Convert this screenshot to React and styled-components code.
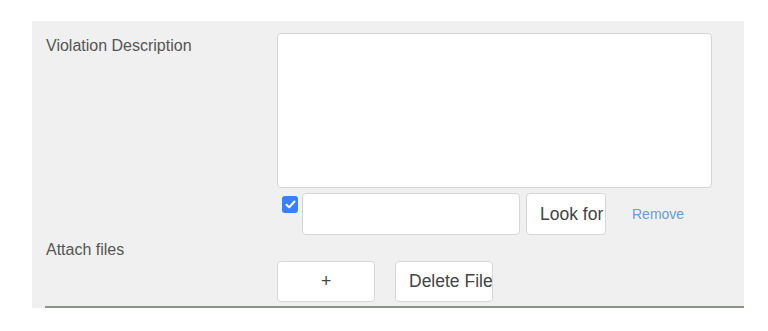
import React from "react";
import styled, { createGlobalStyle } from "styled-components";

const GlobalStyle = createGlobalStyle`
  body {
    margin: 0;
    background: #fff;
    font-family: "Liberation Sans", Arial, sans-serif;
  }
`;

const Page = styled.div`
  padding: 21px 0 0 32px;
`;

const Panel = styled.div`
  width: 712px;
  height: 287px;
  box-sizing: border-box;
  background: #f0f0f0;
  padding-top: 12px;
  display: flex;
  flex-direction: column;
`;

const Row = styled.div`
  display: flex;
  align-items: flex-start;
  margin-top: ${(p) => p.$top || 0}px;
`;

const Label = styled.div`
  width: 231px;
  padding-left: 14px;
  padding-top: ${(p) => p.$pad || 0}px;
  font-size: 16px;
  line-height: 20px;
  color: #555;
`;

const Spacer = styled.div`
  width: 245px;
  flex: none;
`;

const TextArea = styled.textarea`
  width: 435px;
  height: 155px;
  box-sizing: border-box;
  border: 1px solid #d4d4d4;
  border-radius: 4px;
  background: #fff;
  resize: none;
  outline: none;
  margin: 0;
`;

const Check = styled.span`
  width: 16px;
  height: 17px;
  margin: 3px 4px 0 5px;
  border-radius: 3px;
  background: #3a80f2;
  display: flex;
  align-items: center;
  justify-content: center;
  flex: none;
`;

const FileInput = styled.input`
  width: 218px;
  height: 42px;
  box-sizing: border-box;
  border: 1px solid #d6d6d6;
  border-radius: 4px;
  background: #fff;
  margin: 0;
  outline: none;
`;

const Button = styled.button`
  width: ${(p) => p.$w}px;
  height: ${(p) => p.$h || 42}px;
  margin-left: ${(p) => p.$gap || 0}px;
  box-sizing: border-box;
  border: 1px solid #d6d6d6;
  border-radius: 4px;
  background: #fff;
  font-family: "Liberation Sans", Arial, sans-serif;
  font-size: 17.5px;
  color: #444;
  padding: 0 0 0 ${(p) => p.$padLeft ?? 0}px;
  text-align: ${(p) => (p.$padLeft != null ? "left" : "center")};
  white-space: nowrap;
  overflow: hidden;
  flex: none;
`;

const RemoveLink = styled.a`
  margin-left: 26px;
  align-self: center;
  font-size: 14px;
  color: #6c9bd2;
  text-decoration: none;
  cursor: pointer;
`;

const BottomRule = styled.div`
  margin-top: auto;
  margin-left: 13px;
  border-top: 2px solid #8e9489;
`;

export default function App() {
  return (
    <Page>
      <GlobalStyle />
      <Panel>
        <Row>
          <Label $pad={3}>Violation Description</Label>
          <TextArea />
        </Row>
        <Row $top={5}>
          <Spacer />
          <Check>
            <svg width="11" height="9" viewBox="0 0 11 9">
              <path d="M1.5 4.8 L4.2 7.3 L9.5 1.5" stroke="#fff" strokeWidth="2" fill="none" strokeLinecap="round" strokeLinejoin="round" />
            </svg>
          </Check>
          <FileInput type="text" />
          <Button $w={80} $gap={6} $padLeft={13}>Look for</Button>
          <RemoveLink>Remove</RemoveLink>
        </Row>
        <Row $top={5}>
          <Label>Attach files</Label>
        </Row>
        <Row $top={1}>
          <Spacer />
          <Button $w={98} $h={41}>+</Button>
          <Button $w={98} $h={41} $gap={20} $padLeft={13}>Delete Files</Button>
        </Row>
        <BottomRule />
      </Panel>
    </Page>
  );
}
